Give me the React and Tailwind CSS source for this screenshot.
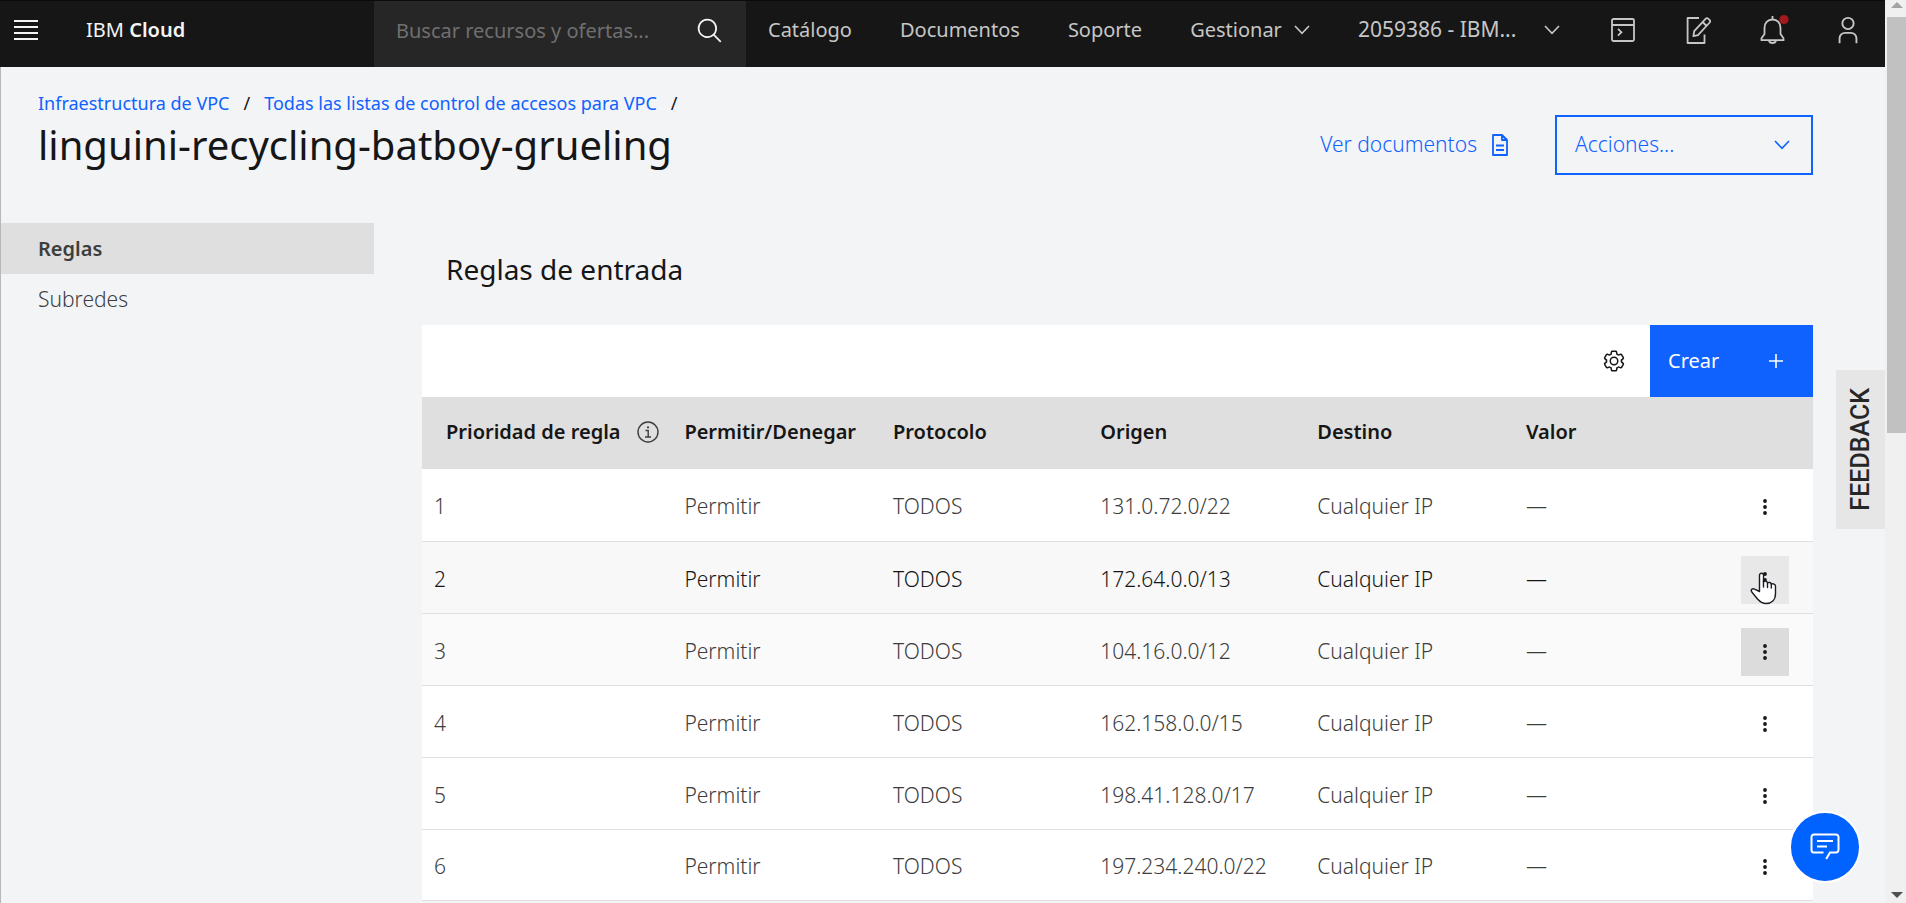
import React from "react";

const rows = [
  ["1", "131.0.72.0/22"],
  ["2", "172.64.0.0/13"],
  ["3", "104.16.0.0/12"],
  ["4", "162.158.0.0/15"],
  ["5", "198.41.128.0/17"],
  ["6", "197.234.240.0/22"],
];

const rowStyles = {
  2: { row: "bg-[#f8f8f8] text-[#161616]", button: "bg-[#e8e8e8]" },
  3: { row: "bg-[#fafafa] text-[#3d3d3d]", button: "bg-[#dcdcdc]" },
};

function Chevron({ className }) {
  return (
    <svg className={className} width="16" height="10" viewBox="0 0 16 10" fill="none" stroke="currentColor" aria-hidden="true">
      <path d="M1 1l7 7.4L15 1" strokeWidth="1.6" />
    </svg>
  );
}

function MenuIcon() {
  return (
    <svg width="24" height="20" viewBox="0 0 24 20" fill="#f4f4f4" aria-hidden="true">
      <path d="M0 0h24v2H0zM0 6h24v2H0zM0 12h24v2H0zM0 18h24v2H0z" />
    </svg>
  );
}

function SearchIcon() {
  return (
    <svg width="28" height="28" viewBox="0 0 32 32" fill="#f4f4f4" aria-hidden="true">
      <path d="M29,27.5859l-7.5521-7.5521a11.0177,11.0177,0,1,0-1.4141,1.4141L27.5859,29ZM4,13a9,9,0,1,1,9,9A9.01,9.01,0,0,1,4,13Z" />
    </svg>
  );
}

function ShellIcon() {
  return (
    <svg width="28" height="28" viewBox="0 0 28 28" fill="none" stroke="currentColor" strokeWidth="1.8" aria-hidden="true">
      <rect x="3" y="3" width="22" height="22" rx="1.5" />
      <path d="M3 9h22M9 12.8l3.4 3.4L9 19.6" />
    </svg>
  );
}

function EditIcon() {
  return (
    <svg width="28" height="32" viewBox="0 0 28 32" fill="none" stroke="currentColor" strokeWidth="1.8" strokeLinejoin="round" aria-hidden="true">
      <path d="M15 4H3.6v25H20.5v-8.5" />
      <path d="M9.4 22.2l.8-5L21.8 4.6a1.6 1.6 0 0 1 2.3 0l1.6 1.6a1.6 1.6 0 0 1 0 2.3L14 21.2zM18.6 8l4 4" />
    </svg>
  );
}

function BellIcon() {
  return (
    <svg width="32" height="32" viewBox="0 0 32 32" fill="none" stroke="currentColor" strokeWidth="1.8" aria-hidden="true">
      <path d="M15.500 2v4M15.500 5.500c-5 0-8 3.700-8 8.400v6.100l-3 4.200v2h22v-2l-3-4.200v-6.100c0-4.700-3-8.400-8-8.400zM12 26.500c.4 1.700 1.800 2.500 3.500 2.500s3.100-.8 3.500-2.500" />
      <circle cx="27" cy="5.500" r="4.600" fill="#a2191f" stroke="none" />
    </svg>
  );
}

function UserIcon() {
  return (
    <svg width="30" height="30" viewBox="0 0 32 32" fill="currentColor" aria-hidden="true">
      <path d="M16 4a5 5 0 1 1-5 5 5 5 0 0 1 5-5m0-2a7 7 0 1 0 7 7A7 7 0 0 0 16 2zM26 30H24V25a5 5 0 0 0-5-5H13a5 5 0 0 0-5 5v5H6V25a7 7 0 0 1 7-7h6a7 7 0 0 1 7 7z" />
    </svg>
  );
}

function DocumentIcon() {
  return (
    <svg width="18" height="24" viewBox="0 0 18 24" fill="none" stroke="currentColor" strokeWidth="1.8" strokeLinejoin="round" aria-hidden="true">
      <path d="M11 2H2v20h14V7zM11 2v5h5M5 12.500h8M5 17h8" />
    </svg>
  );
}

function GearIcon() {
  return (
    <svg width="24" height="24" viewBox="0 0 32 32" fill="#161616" aria-hidden="true">
      <path d="M27,16.760c0-.25,0-.5,0-.76s0-.51,0-.77l1.920-1.680A2,2,0,0,0,29.300,11L26.940,7a2,2,0,0,0-1.730-1,2,2,0,0,0-.64.1l-2.430.82a11.350,11.350,0,0,0-1.310-.75l-.51-2.520a2,2,0,0,0-2-1.610H13.640a2,2,0,0,0-2,1.610l-.51,2.520a11.480,11.480,0,0,0-1.320.75L7.430,6.060A2,2,0,0,0,6.790,6,2,2,0,0,0,5.060,7L2.700,11a2,2,0,0,0,.41,2.510L5,15.240c0,.25,0,.5,0,.76s0,.51,0,.77L3.110,18.450A2,2,0,0,0,2.700,21L5.060,25a2,2,0,0,0,1.730,1,2,2,0,0,0,.64-.1l2.430-.82a11.350,11.350,0,0,0,1.310.75l.51,2.520a2,2,0,0,0,2,1.610h4.720a2,2,0,0,0,2-1.610l.51-2.520a11.480,11.480,0,0,0,1.320-.75l2.420.82a2,2,0,0,0,.64.1,2,2,0,0,0,1.730-1L29.300,21a2,2,0,0,0-.41-2.510ZM25.210,24l-3.430-1.160a8.860,8.860,0,0,1-2.710,1.570L18.360,28H13.640l-.71-3.550a9.360,9.360,0,0,1-2.700-1.570L6.790,24,4.430,20l2.720-2.400a8.900,8.900,0,0,1,0-3.130L4.430,12,6.790,8l3.430,1.160a8.860,8.860,0,0,1,2.710-1.570L13.640,4h4.720l.71,3.550a9.360,9.360,0,0,1,2.700,1.570L25.210,8,27.570,12l-2.720,2.400a8.900,8.900,0,0,1,0,3.130L27.570,20Z" />
      <circle cx="16" cy="16" r="5" fill="none" stroke="#161616" strokeWidth="2" />
    </svg>
  );
}

function InfoIcon() {
  return (
    <svg width="22" height="22" viewBox="0 0 22 22" fill="none" stroke="#3d3d3d" strokeWidth="1.400" aria-hidden="true">
      <circle cx="11" cy="11" r="10" />
      <path d="M8.500 9.500h2.700v6.300M8 16h6" />
      <circle cx="11" cy="6.300" r="1.100" fill="#3d3d3d" stroke="none" />
    </svg>
  );
}

function DotsIcon() {
  return (
    <svg width="6" height="18" viewBox="0 0 6 18" fill="#161616" aria-hidden="true">
      <circle cx="3" cy="3" r="1.900" />
      <circle cx="3" cy="9" r="1.900" />
      <circle cx="3" cy="15" r="1.900" />
    </svg>
  );
}

function HandPointer() {
  return (
    <svg className="pointer-events-none absolute top-4 left-2" width="30" height="34" viewBox="0 0 30 34" fill="#fff" stroke="#1b1b24" strokeWidth="1.400" strokeLinejoin="round" strokeLinecap="round" aria-hidden="true">
      <path d="M10.500 19.500V3.200c0-2.700 4-2.700 4 0V10c1-1.500 3.700-1 4 1 1.200-1.100 3.500-.6 3.800 1.200 1.700-.9 4.200 0 4.200 2v7.300c0 6.500-4 10-9.500 10-4.500 0-6.500-2.200-8.500-4.500L3 20.300c-2-2.600.5-4.300 2.600-3.200z" />
      <path d="M14.500 9v6M18.500 11v4.500M22.300 12.500V16" fill="none" />
    </svg>
  );
}

function ChatIcon() {
  return (
    <svg width="30" height="28" viewBox="0 0 30 28" fill="none" stroke="#fff" strokeWidth="2" aria-hidden="true">
      <path d="M13.500 19.500H4a2.500 2.500 0 0 1-2.500-2.500V4A2.500 2.500 0 0 1 4 1.500h22A2.500 2.500 0 0 1 28.500 4v13a2.500 2.500 0 0 1-2.500 2.500h-6L16.200 26M7 8h16M7 13.500h10" />
    </svg>
  );
}

function Header() {
  return (
    <header className="flex h-[67px] shrink-0 items-center border-t border-[#0b0b0b] bg-[#161616] text-[20px] text-[#c6c6c6]">
      <div className="flex w-[374px] shrink-0 items-center gap-12 pb-2 pl-3.5">
        <button type="button" aria-label="Menú">
          <MenuIcon />
        </button>
        <a href="#inicio" className="text-[#f4f4f4]">
          IBM <b className="font-semibold">Cloud</b>
        </a>
      </div>
      <div className="flex h-full w-[372px] shrink-0 items-center gap-6 bg-[#262626] pr-[22px] pb-1.5 pl-[22px]">
        <input
          type="text"
          aria-label="Buscar recursos y ofertas"
          placeholder="Buscar recursos y ofertas..."
          className="min-w-0 flex-1 bg-transparent outline-none placeholder:text-[#6f6f6f]"
        />
        <button type="button" aria-label="Buscar">
          <SearchIcon />
        </button>
      </div>
      <nav className="flex h-full flex-1 items-center gap-12 pb-2 pl-[22px] whitespace-nowrap">
        <a href="#catalogo">Catálogo</a>
        <a href="#documentos">Documentos</a>
        <a href="#soporte">Soporte</a>
        <button type="button" className="flex items-center gap-3">
          Gestionar
          <Chevron />
        </button>
        <button type="button" className="flex items-center gap-7 text-[21px]">
          2059386 - IBM...
          <Chevron />
        </button>
      </nav>
      <div className="flex h-full shrink-0 pb-2 [&>button]:flex [&>button]:w-[75px] [&>button]:items-center [&>button]:justify-center">
        <button type="button" aria-label="Shell">
          <ShellIcon />
        </button>
        <button type="button" aria-label="Editar">
          <EditIcon />
        </button>
        <button type="button" aria-label="Notificaciones">
          <BellIcon />
        </button>
        <button type="button" aria-label="Cuenta">
          <UserIcon />
        </button>
      </div>
    </header>
  );
}

function RulesTable() {
  return (
    <table className="w-full table-fixed border-separate border-spacing-0 text-left">
      <colgroup>
        <col className="w-[18%]" />
        <col className="w-[15%]" />
        <col className="w-[14.9%]" />
        <col className="w-[15.6%]" />
        <col className="w-[15%]" />
        <col />
        <col className="w-24" />
      </colgroup>
      <thead>
        <tr className="h-[72px] bg-[#dfdfdf] whitespace-nowrap text-[#161616] [&>th]:pb-0.5 [&>th]:pl-3 [&>th]:font-semibold">
          <th scope="col">
            <span className="flex items-center gap-4 pl-3">
              Prioridad de regla
              <InfoIcon />
            </span>
          </th>
          <th scope="col">Permitir/Denegar</th>
          <th scope="col">Protocolo</th>
          <th scope="col">Origen</th>
          <th scope="col">Destino</th>
          <th scope="col">Valor</th>
          <th scope="col" aria-label="Acciones" />
        </tr>
      </thead>
      <tbody className="text-[21px] font-light">
        {rows.map(([priority, source], index) => {
          const style = rowStyles[priority] || { row: "bg-white text-[#3d3d3d]", button: "" };
          return (
            <tr
              key={priority}
              className={
                "h-[72px] [&>td]:border-[#dfdfdf] [&>td]:pt-1 [&>td]:pl-3 " +
                (index > 0 ? "[&>td]:border-t " : "") +
                (index === rows.length - 1 ? "[&>td]:border-b " : "") +
                style.row
              }
            >
              <td>{priority}</td>
              <td>Permitir</td>
              <td>TODOS</td>
              <td>{source}</td>
              <td>Cualquier IP</td>
              <td>—</td>
              <td>
                <button
                  type="button"
                  aria-label={"Acciones de la regla " + priority}
                  className={"relative ml-3 flex size-12 items-center justify-center " + style.button}
                >
                  <DotsIcon />
                  {priority === "2" && <HandPointer />}
                </button>
              </td>
            </tr>
          );
        })}
      </tbody>
    </table>
  );
}

export default function App() {
  return (
    <div className="flex h-screen overflow-hidden bg-[#f3f4f6] font-['Noto_Sans',sans-serif] text-[20px] text-[#161616]">
      <div className="relative flex min-w-0 flex-1 flex-col">
        <Header />
        <div className="flex min-h-0 flex-1 flex-col border-l border-[#b8b8b8]">
          <div className="flex h-[156px] shrink-0 justify-between pr-[72px] pl-[37px]">
            <div className="pt-5">
              <nav aria-label="Ruta" className="flex gap-3.5 text-[18px] leading-8">
                <a href="#vpc" className="text-[#0f62fe]">Infraestructura de VPC</a>
                <span>/</span>
                <a href="#acl" className="text-[#0f62fe]">Todas las listas de control de accesos para VPC</a>
                <span>/</span>
              </nav>
              <h1 className="text-[40px] leading-[52px]">linguini-recycling-batboy-grueling</h1>
            </div>
            <div className="flex items-start gap-[46px] pt-12 text-[21px] font-light text-[#0f62fe]">
              <a href="#docs" className="flex h-[60px] items-center gap-3.5">
                Ver documentos
                <DocumentIcon />
              </a>
              <button type="button" className="flex h-[60px] w-[258px] items-center justify-between border-2 border-[#0f62fe] pr-[21px] pl-[18px]">
                Acciones...
                <Chevron />
              </button>
            </div>
          </div>
          <div className="flex min-h-0 flex-1">
            <nav aria-label="Secciones" className="w-[373px] shrink-0 text-[#3d3d3d]">
              <a href="#reglas" className="flex h-[51px] items-center bg-[#dfdfdf] pl-[37px] font-semibold">Reglas</a>
              <a href="#subredes" className="flex h-[51px] items-center pl-[37px] text-[21px] font-light">Subredes</a>
            </nav>
            <main className="min-w-0 flex-1 pr-[72px] pl-12">
              <h2 className="h-[102px] pt-[26px] pl-6 text-[28px] leading-10">Reglas de entrada</h2>
              <div className="flex h-[72px] items-center justify-end bg-white">
                <button type="button" aria-label="Configuración" className="flex h-full w-[72px] items-center justify-center">
                  <GearIcon />
                </button>
                <button type="button" className="flex h-full w-[163px] items-center justify-between bg-[#0f62fe] pr-[30px] pl-[18px] text-white">
                  Crear
                  <svg width="14" height="14" viewBox="0 0 14 14" stroke="#fff" strokeWidth="1.600" aria-hidden="true">
                    <path d="M7 0v14M0 7h14" />
                  </svg>
                </button>
              </div>
              <RulesTable />
            </main>
          </div>
        </div>
        <button type="button" className="absolute top-[370px] right-0 flex h-[159px] w-[49px] items-center justify-center bg-[#e6e6e6]">
          <span className="rotate-180 font-['Roboto',sans-serif] text-[25px] font-medium text-[#262626] [writing-mode:vertical-rl]">FEEDBACK</span>
        </button>
        <button type="button" aria-label="Chat" className="absolute right-6 bottom-5 flex size-[72px] items-center justify-center rounded-full border-2 border-white bg-[#0062ff]">
          <ChatIcon />
        </button>
      </div>
      <div className="flex w-[21px] shrink-0 flex-col items-center bg-[#f0f0f0] pl-0.5" aria-hidden="true">
        <svg width="12" height="17" viewBox="0 0 12 17" fill="#a3a3a3">
          <path d="M6 2l6 6H0z" />
        </svg>
        <div className="h-[416px] w-full bg-[#c1c1c1]" />
        <svg className="mt-auto" width="12" height="15" viewBox="0 0 12 15" fill="#505050">
          <path d="M0 4h12l-6 6z" />
        </svg>
      </div>
    </div>
  );
}
